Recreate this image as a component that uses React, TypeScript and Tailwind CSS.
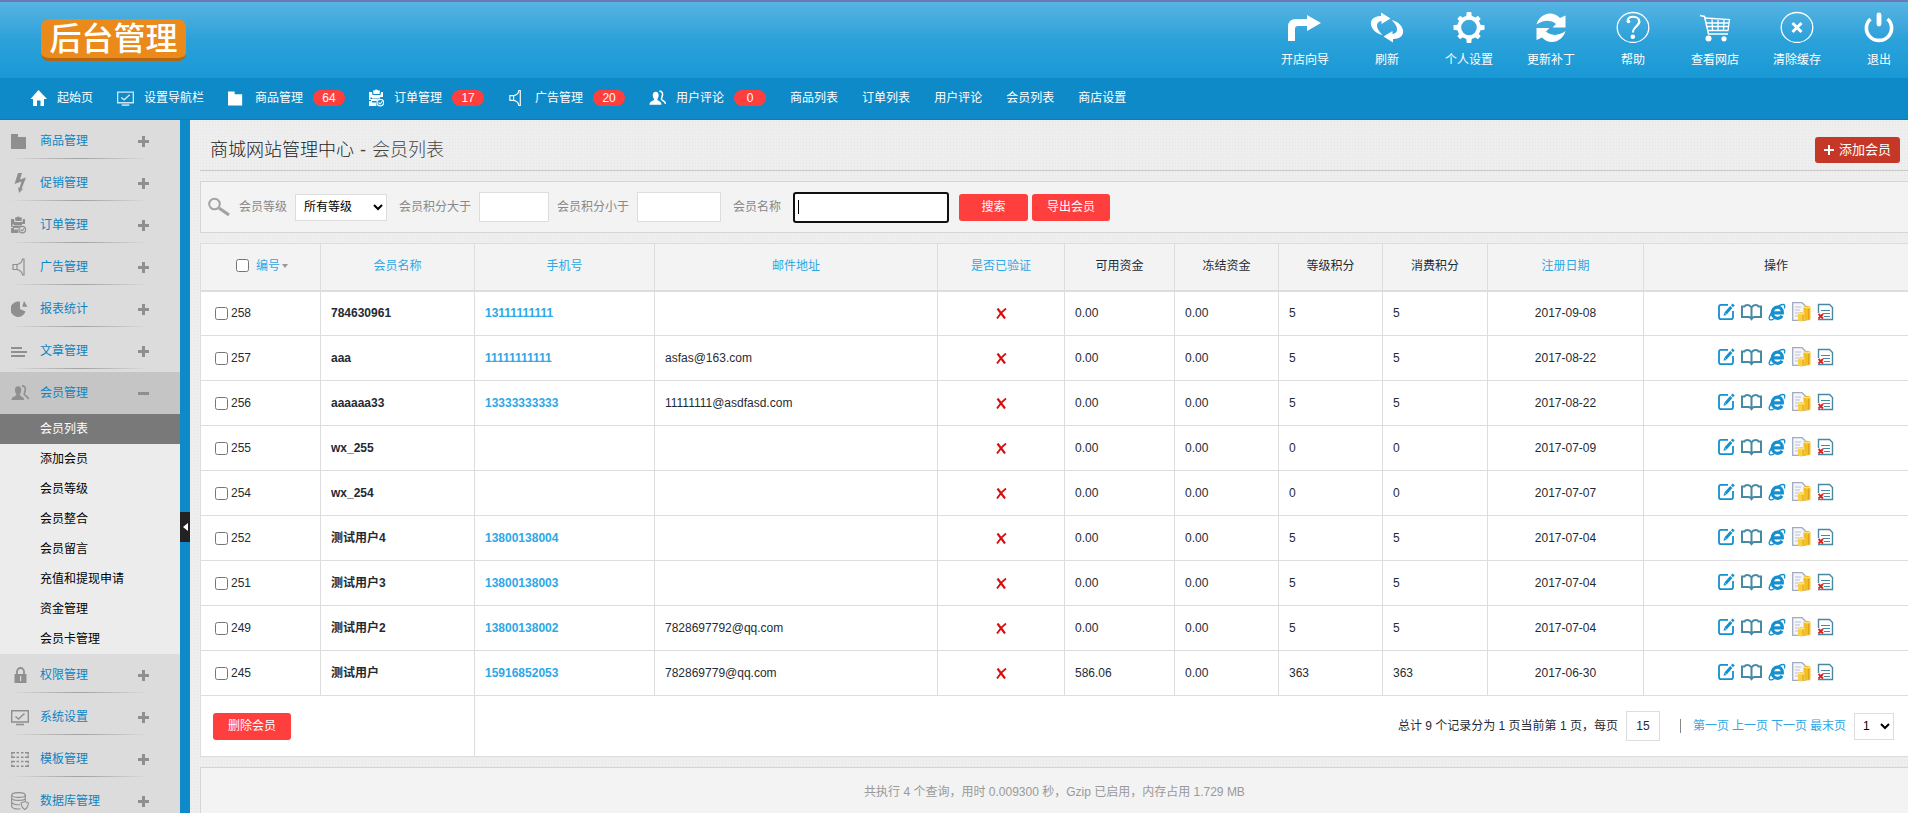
import React from "react";

type IconProps = { className?: string };

/* ---------- top toolbar icons ---------- */

function TurnIcon() {
  return (
    <svg width="34" height="32" viewBox="0 0 34 32" fill="currentColor">
      <path d="M0 30V16Q0 8 8 8H19V4L33 12L19 20V15H10Q7 15 7 18V30z" />
    </svg>
  );
}

function ReloadIcon() {
  const arrow = "M11 1.500L20.500 7.500L11.500 13V10C5.500 11 5 17 12.500 24C4 22 -1 15 1.500 9.500C3 6.500 6.500 5 11 5z";
  return (
    <svg width="34" height="32" viewBox="0 0 34 32" fill="currentColor">
      <path d={arrow} />
      <path d={arrow} transform="rotate(180 17 16.5)" />
    </svg>
  );
}

function GearIcon() {
  return (
    <svg width="34" height="32" viewBox="0 0 34 32" fill="currentColor">
      <circle cx="17" cy="16.500" r="9.800" fill="none" stroke="currentColor" strokeWidth="4" />
      {[0, 90, 180, 270].map((deg) => (
        <path key={deg} d="M14 6.500L14.800 1H19.200L20 6.500z" transform={`rotate(${deg} 17 16.5)`} />
      ))}
      {[45, 135, 225, 315].map((deg) => (
        <path key={deg} d="M14.300 6.500L15 2H19L19.700 6.500z" transform={`rotate(${deg} 17 16.5)`} />
      ))}
    </svg>
  );
}

function SyncIcon() {
  const arrow = "M2.500 13.500C4 7.500 9.500 2.500 16 2.500C20 2.500 23 4 26 7L31.500 4.500V16.500H18.500L22 13C17 8.500 9 8.500 2.500 13.500z";
  return (
    <svg width="34" height="32" viewBox="0 0 34 32" fill="currentColor">
      <path d={arrow} />
      <path d={arrow} transform="rotate(180 17 16.8)" />
    </svg>
  );
}

function HelpIcon() {
  return (
    <svg width="34" height="32" viewBox="0 0 34 32" fill="none" stroke="currentColor">
      <ellipse cx="17" cy="16.500" rx="15.800" ry="15" strokeWidth="1.300" />
      <path d="M11.500 10.500C11.500 7 14 5.800 17.200 5.800C21 5.800 23.500 8 23.500 11C23.500 15 17 15.500 17 21.500" strokeWidth="2" />
      <path d="M22.500 8C24 11 22 14 19.500 16" strokeWidth="2" />
      <circle cx="12.500" cy="10.500" r="1.800" fill="currentColor" stroke="none" />
      <circle cx="16.800" cy="25.800" r="2.300" fill="currentColor" stroke="none" />
    </svg>
  );
}

function CartIcon() {
  return (
    <svg width="34" height="32" viewBox="0 0 34 32" fill="none" stroke="currentColor" strokeWidth="1.500">
      <path d="M2 4.500L6.500 5.500L10.500 23H30" />
      <path d="M7 7L31.500 8.500L30 19.500H9.500M8 12H31M8.500 15.500H30.500M14 7.500L14.500 19.500M20 8V19.500M26 8.500L25.500 19.500" strokeWidth="1.300" />
      <circle cx="10.500" cy="27.500" r="3" fill="currentColor" stroke="none" />
      <circle cx="26" cy="27.800" r="2.600" fill="currentColor" stroke="none" />
    </svg>
  );
}

function ClearIcon() {
  return (
    <svg width="34" height="32" viewBox="0 0 34 32" fill="none" stroke="currentColor">
      <ellipse cx="17" cy="16.500" rx="15.800" ry="15" strokeWidth="1.300" />
      <path d="M12.500 12L21.500 21M21.500 12L12.500 21" strokeWidth="3" />
    </svg>
  );
}

function PowerIcon() {
  return (
    <svg width="34" height="32" viewBox="0 0 34 32" fill="none" stroke="currentColor">
      <path d="M8.500 8A12.600 12.300 0 1 0 25.500 8" strokeWidth="3.600" />
      <path d="M17 4V13" strokeWidth="4.800" strokeLinecap="round" />
    </svg>
  );
}

/* ---------- menu icons, all on a 18px grid ---------- */

function HomeIcon() {
  return (
    <svg width="17" height="18" viewBox="0 0 17 18" fill="currentColor">
      <path d="M8.500 1L17 10H14V17H10.500V11.500H7V17H3V10H0.500z" />
    </svg>
  );
}

function FolderIcon({ className = "w-[18px]" }: IconProps) {
  return (
    <svg className={className} height="18" viewBox="0 0 18 18" preserveAspectRatio="xMinYMid" fill="currentColor">
      <path d="M0 2H7V5H15V17H0z" />
    </svg>
  );
}

function BoltIcon() {
  return (
    <svg width="18" height="20" viewBox="0 0 18 20" fill="currentColor">
      <path d="M7 0H11L9 6.500L15 4.500L10.500 16L12.500 15.500L8 20L7 14L8.500 15L10.500 8.500L3.500 11z" />
    </svg>
  );
}

function ClipboardIcon({ className = "w-[18px]" }: IconProps) {
  return (
    <svg className={className} height="18" viewBox="0 0 18 18" preserveAspectRatio="xMinYMid slice">
      <path d="M4 1.500H5.500A2 2 0 0 1 9 1.500H11L10.500 5H4.500z" fill="currentColor" />
      <path d="M0 3H3L3.500 6H11.500L12 3H14V8H11V9.500H3V8.500H1.500V10H9L7.500 12H3V13.500H7L7.500 17H0V12H2V11H0z" fill="currentColor" />
      <circle cx="11.300" cy="13.600" r="3.300" fill="none" stroke="currentColor" strokeWidth="1.200" />
      <path d="M9.500 13.500L11 15L13.300 12.300" fill="none" stroke="currentColor" strokeWidth="1.100" />
    </svg>
  );
}

function HornIcon({ className = "w-[18px]" }: IconProps) {
  return (
    <svg className={className} height="18" viewBox="0 0 18 18" fill="none" stroke="currentColor" strokeWidth="1.200">
      <path d="M2 6.500H6V11.500H2z" />
      <path d="M6 6.500Q11 5.500 11.500 1H13V17H11.500Q11 12.500 6 11.500" />
    </svg>
  );
}

function PieIcon() {
  return (
    <svg width="18" height="18" viewBox="0 0 18 18" fill="currentColor">
      <path d="M9 1.800V9L14.500 11.500A7.700 7.700 0 1 1 9 1.800z" />
      <path d="M11.200 6.800L13 1L16.500 6.800z" />
    </svg>
  );
}

function LinesIcon() {
  return (
    <svg width="18" height="18" viewBox="0 0 18 18" fill="currentColor">
      <path d="M0 5H11V7H0zM0 9H16V11H0zM0 13H14V15H0z" />
    </svg>
  );
}

function UsersIcon({ className = "w-[18px]" }: IconProps) {
  return (
    <svg className={className} height="18" viewBox="0 0 19 18" preserveAspectRatio="xMinYMid" fill="currentColor">
      <path d="M7.500 2C10 2 11 4 10.800 6.500C10.600 8.500 9.500 9.800 9.300 10.800C9.500 12.500 14 12.500 14 16.500H0.500C0.500 12.500 5.500 12.500 5.700 10.800C5.500 9.800 4.400 8.500 4.200 6.500C4 4 5 2 7.500 2z" />
      <path d="M11.500 1.500C14.500 1 15.500 3.500 15 6C14.800 8 13.800 9 14 10.500C15 12 18 12.500 18.500 15.500" fill="none" stroke="currentColor" strokeWidth="1.700" />
    </svg>
  );
}

function LockIcon() {
  return (
    <svg width="18" height="18" viewBox="0 0 18 18">
      <path d="M6 8V5.500A3.500 3.500 0 0 1 13 5.500V8" fill="none" stroke="currentColor" strokeWidth="1.800" />
      <path d="M3.500 8H15.500V17H3.500zM9 10V15H10.200V10z" fill="currentColor" fillRule="evenodd" />
    </svg>
  );
}

function MonitorIcon({ className = "w-[18px]" }: IconProps) {
  return (
    <svg className={className} height="18" viewBox="0 0 18 18" fill="none" stroke="currentColor">
      <path d="M0.700 2.700H17.300V14H0.700z" strokeWidth="1.400" />
      <path d="M4.500 8.500L7.500 11L13.500 5.500" strokeWidth="1.500" />
      <path d="M5 16.500H13" strokeWidth="1.600" />
    </svg>
  );
}

function TemplateIcon() {
  return (
    <svg width="18" height="18" viewBox="0 0 18 18" fill="none" stroke="currentColor" strokeWidth="1.500">
      <path d="M0.800 4.500V2.800H4M5.500 2.800H8M10 2.800H12.500M14 2.800H17.200V4.500M0.800 5.500V7.200H4M5.500 7.200H8M10 7.200H12.500M14 7.200H17.200V5.500" />
      <path d="M0.800 13V11.500H4M5.500 11.500H8M10 11.500H12.500M14 11.500H17.200V13M0.800 14.500V16.200H4M5.500 16.200H8M10 16.200H12.500M14 16.200H17.200V14.500" />
    </svg>
  );
}

function DatabaseIcon() {
  return (
    <svg width="18" height="18" viewBox="0 0 18 18" fill="none" stroke="currentColor" strokeWidth="1.100">
      <ellipse cx="7.500" cy="3" rx="6.800" ry="2.400" />
      <path d="M0.700 3V6.500C2 9 13 9 14.300 6.500V3M0.700 6.500V10.500C2 12.800 7 13 9 12.500M14.300 6.500V9M0.700 10.500V14.500C2 17 6 17.300 9.500 16.800" />
      <path d="M10.200 10.800L13.800 9.500L17.300 10.800C17.300 14 16.500 16 13.800 17.400C11 16 10.200 14 10.200 10.800z" />
    </svg>
  );
}

/* ---------- row action icons ---------- */

function EditIcon() {
  return (
    <svg width="17" height="18" viewBox="0 0 17 18" fill="none" stroke="#1590cf">
      <path d="M10 1.800H3Q1 1.800 1 4V14Q1 16.200 3 16.200H13Q15 16.200 15 14V8" strokeWidth="1.800" />
      <path d="M7.500 10.500L13.300 4" strokeWidth="3" />
      <path d="M14 3.200L15.600 1.400" strokeWidth="2.800" />
      <path d="M5.500 12.800L6.200 9.800L8.500 12z" fill="#1590cf" stroke="none" />
    </svg>
  );
}

function BookIcon() {
  return (
    <svg width="21" height="18" viewBox="0 0 21 18" fill="none" stroke="#4789a3" strokeWidth="2">
      <path d="M10.500 15V4.500Q9 2 6.500 2Q4 2 3.500 3.500H1V14H7.500Q9.500 14 10.500 15.500Q11.500 14 13.500 14H20V3.500H17.500Q17 2 14.500 2Q12 2 10.500 4.500" />
      <path d="M8.500 15H12.500L10.500 17.800z" fill="#4789a3" stroke="none" />
    </svg>
  );
}

function BrowserIcon() {
  return (
    <svg width="18" height="18" viewBox="0 0 18 18" fill="none" stroke="#1590cf">
      <path d="M4.500 9.800H14.300C14.500 6.300 12.500 4.200 9.500 4.200C6.500 4.200 4.300 6.600 4.300 9.800C4.300 13 6.500 15.300 9.700 15.300C11.500 15.300 13 14.500 14 12.800" strokeWidth="3.200" />
      <path d="M16.300 5.500C17.300 3 16.800 1.400 14.800 1.500C10.500 1.800 2.500 8.500 1.200 14.500C0.800 17.500 3.500 17.500 6.500 15.500" strokeWidth="1.300" />
    </svg>
  );
}

function AccountIcon() {
  return (
    <svg width="19" height="20" viewBox="0 0 19 20">
      <path d="M0.700 0.700H10L13 3.500V18.300H0.700z" fill="#f4f6fc" stroke="#a3a9c0" strokeWidth="1.300" />
      <path d="M3 5H9M3 8H8M3 11H7M3 14H6" stroke="#b9bfd6" strokeWidth="1.200" />
      <path d="M11.500 5Q15 2.500 18.500 5V17.500Q15 19.500 11.500 17.500z" fill="#f3bd24" />
      <path d="M6 11Q9 9 12.500 11V18.500Q9 20.500 6 18.500z" fill="#f8cf45" />
      <path d="M11.500 5Q15 7 18.500 5M6 11Q9 13 12.500 11" stroke="#fdeb9c" strokeWidth="1" fill="none" />
      <path d="M16.500 7V17.500M11 13V18.500" stroke="#e0a218" strokeWidth="1" />
    </svg>
  );
}

function RemoveIcon() {
  return (
    <svg width="17" height="18" viewBox="0 0 17 18" fill="none">
      <path d="M1.500 10V1.500H12.500L15.500 4.500V16.500H1" stroke="#4789a3" strokeWidth="1.400" />
      <path d="M4 7.500H13M6 10.500H13M7 13.500H13" stroke="#4789a3" strokeWidth="1.200" />
      <path d="M1.500 11L6 15.500M6 11L1.500 15.500" stroke="#dd2222" strokeWidth="1.800" />
    </svg>
  );
}

const TOOLS = [
  { label: "开店向导", icon: <TurnIcon /> },
  { label: "刷新", icon: <ReloadIcon /> },
  { label: "个人设置", icon: <GearIcon /> },
  { label: "更新补丁", icon: <SyncIcon /> },
  { label: "帮助", icon: <HelpIcon /> },
  { label: "查看网店", icon: <CartIcon /> },
  { label: "清除缓存", icon: <ClearIcon /> },
  { label: "退出", icon: <PowerIcon /> },
];

const NAV: { label: string; icon?: React.ReactNode; count?: number }[] = [
  { label: "起始页", icon: <HomeIcon /> },
  { label: "设置导航栏", icon: <MonitorIcon className="w-[17px] opacity-80" /> },
  { label: "商品管理", icon: <FolderIcon className="w-[17px]" />, count: 64 },
  { label: "订单管理", icon: <ClipboardIcon className="w-[15px]" />, count: 17 },
  { label: "广告管理", icon: <HornIcon className="w-[17px]" />, count: 20 },
  { label: "用户评论", icon: <UsersIcon className="w-[17px]" />, count: 0 },
  { label: "商品列表" },
  { label: "订单列表" },
  { label: "用户评论" },
  { label: "会员列表" },
  { label: "商店设置" },
];

const MENU: { label: string; icon: React.ReactNode; children?: string[] }[] = [
  { label: "商品管理", icon: <FolderIcon /> },
  { label: "促销管理", icon: <BoltIcon /> },
  { label: "订单管理", icon: <ClipboardIcon /> },
  { label: "广告管理", icon: <HornIcon /> },
  { label: "报表统计", icon: <PieIcon /> },
  { label: "文章管理", icon: <LinesIcon /> },
  {
    label: "会员管理",
    icon: <UsersIcon />,
    children: [
      "会员列表",
      "添加会员",
      "会员等级",
      "会员整合",
      "会员留言",
      "充值和提现申请",
      "资金管理",
      "会员卡管理",
    ],
  },
  { label: "权限管理", icon: <LockIcon /> },
  { label: "系统设置", icon: <MonitorIcon /> },
  { label: "模板管理", icon: <TemplateIcon /> },
  { label: "数据库管理", icon: <DatabaseIcon /> },
];

const USERS = [
  { id: 258, name: "784630961", phone: "13111111111", email: "", money: "0.00", rank: 5, pay: 5, date: "2017-09-08" },
  { id: 257, name: "aaa", phone: "11111111111", email: "asfas@163.com", money: "0.00", rank: 5, pay: 5, date: "2017-08-22" },
  { id: 256, name: "aaaaaa33", phone: "13333333333", email: "11111111@asdfasd.com", money: "0.00", rank: 5, pay: 5, date: "2017-08-22" },
  { id: 255, name: "wx_255", phone: "", email: "", money: "0.00", rank: 0, pay: 0, date: "2017-07-09" },
  { id: 254, name: "wx_254", phone: "", email: "", money: "0.00", rank: 0, pay: 0, date: "2017-07-07" },
  { id: 252, name: "测试用户4", phone: "13800138004", email: "", money: "0.00", rank: 5, pay: 5, date: "2017-07-04" },
  { id: 251, name: "测试用户3", phone: "13800138003", email: "", money: "0.00", rank: 5, pay: 5, date: "2017-07-04" },
  { id: 249, name: "测试用户2", phone: "13800138002", email: "7828697792@qq.com", money: "0.00", rank: 5, pay: 5, date: "2017-07-04" },
  { id: 245, name: "测试用户", phone: "15916852053", email: "782869779@qq.com", money: "586.06", rank: 363, pay: 363, date: "2017-06-30" },
];

const ACTIONS = [
  { title: "编辑", icon: <EditIcon /> },
  { title: "收货地址", icon: <BookIcon /> },
  { title: "查看订单", icon: <BrowserIcon /> },
  { title: "查看账目明细", icon: <AccountIcon /> },
  { title: "移除", icon: <RemoveIcon /> },
];

function Header() {
  return (
    <header className="shrink-0 text-white">
      <div className="flex h-[78px] items-start justify-between border-t-2 border-[#6c79b3] bg-linear-to-b from-[#55b4e2] via-[#2ba1d9] to-[#1899d6] pr-[5px] pl-[41px]">
        <a
          href="#"
          className="mt-[17px] flex h-[42px] w-[145px] items-center justify-center rounded-lg border-b-[3px] border-[#b5660f] bg-[#ea8a1a] text-[32px] leading-none font-medium"
        >
          后台管理
        </a>
        <ul className="flex gap-[34px] pt-[9px]">
          {TOOLS.map((tool) => (
            <li key={tool.label} className="w-12">
              <a href="#" className="flex flex-col items-center gap-[9px] whitespace-nowrap">
                {tool.icon}
                <span className="leading-4">{tool.label}</span>
              </a>
            </li>
          ))}
        </ul>
      </div>
      <nav className="h-[42px] border-b border-[#0b7cb8] bg-[#0e8ac9] px-[30px]">
        <ul className="flex h-[39px] items-center gap-6">
          {NAV.map((item, index) => (
            <li key={index}>
              <a href="#" className="flex items-center gap-[10px]">
                {item.icon}
                <span>{item.label}</span>
                {item.count !== undefined && (
                  <span className="h-4 w-8 rounded-full bg-[#ff3e3e] text-center leading-4">{item.count}</span>
                )}
              </a>
            </li>
          ))}
        </ul>
      </nav>
    </header>
  );
}

function Sidebar() {
  return (
    <aside className="w-[180px] shrink-0 overflow-hidden bg-[#dcdcdc]">
      {MENU.map((item) => (
        <div key={item.label}>
          <button
            className={
              item.children
                ? "flex h-[42px] w-full flex-col bg-[#c5c5c5]"
                : "flex h-[42px] w-full flex-col"
            }
          >
            <span className="flex h-[38px] items-center pt-1 pl-[11px] text-[#8f8f8f]">
              {item.icon}
              <span className="ml-[11px] w-[98px] text-left text-[#0e83c2]">{item.label}</span>
              <svg width="11" height="11" viewBox="0 0 11 11" fill="currentColor">
                <path d={item.children ? "M0 4H11V7H0z" : "M4 0H7V4H11V7H7V11H4V7H0V4H4z"} />
              </svg>
            </span>
            {!item.children && (
              <span className="ml-[10px] h-px w-[138px] bg-linear-to-r from-transparent via-[#a0a0a0] to-transparent" />
            )}
          </button>
          {item.children && (
            <ul className="bg-[#ececec]">
              {item.children.map((child, index) => (
                <li key={child}>
                  <a
                    href="#"
                    className={
                      index === 0
                        ? "block bg-[#797979] pl-10 leading-[30px] text-white"
                        : "block pl-10 leading-[30px] text-black"
                    }
                  >
                    {child}
                  </a>
                </li>
              ))}
            </ul>
          )}
        </div>
      ))}
    </aside>
  );
}

function SearchBar() {
  const field = "h-[30px] border border-[#ddd] bg-white px-1";
  return (
    <form className="flex h-[52px] items-center border border-r-0 border-[#d5d5d5] bg-[#f3f3f3] pl-[7px] text-[#888]">
      <svg width="22" height="20" viewBox="0 0 22 20" fill="none" stroke="#a3a3a3">
        <circle cx="6.500" cy="7" r="5.300" strokeWidth="2" />
        <path d="M11 11L21 18" strokeWidth="3.200" />
      </svg>
      <label htmlFor="rank" className="ml-[9px]">会员等级</label>
      <select id="rank" className="ml-2 h-[27px] w-[92px] border border-[#ddd] bg-white pl-1 text-black">
        <option>所有等级</option>
      </select>
      <label htmlFor="points-gt" className="ml-3">会员积分大于</label>
      <input id="points-gt" type="text" className={`${field} ml-2 w-[70px]`} />
      <label htmlFor="points-lt" className="ml-2">会员积分小于</label>
      <input id="points-lt" type="text" className={`${field} ml-2 w-[84px]`} />
      <label htmlFor="keyword" className="ml-3">会员名称</label>
      <div className="relative ml-[14px]">
        <input
          id="keyword"
          type="text"
          autoFocus
          className="block h-[27px] w-[152px] rounded-[1px] bg-white px-1 text-black caret-transparent outline-2 outline-[#101010]"
        />
        <span className="absolute top-[6px] left-[3px] h-[14px] w-px bg-black" />
      </div>
      <button type="button" className="ml-3 h-[27px] w-[69px] rounded-[3px] bg-[#ff3e3e] text-white">搜索</button>
      <button type="button" className="ml-1 h-[27px] w-[78px] rounded-[3px] bg-[#ff3e3e] text-white">导出会员</button>
    </form>
  );
}

function UserTable() {
  const th = "border border-[#ddd] pb-[2px] font-normal";
  const td = "border border-[#ddd] px-[10px]";
  return (
    <table className="w-full table-fixed border-collapse bg-white text-[#1f2b33]">
      <colgroup>
        <col className="w-[120px]" />
        <col className="w-[154px]" />
        <col className="w-[180px]" />
        <col />
        <col className="w-[127px]" />
        <col className="w-[110px]" />
        <col className="w-[104px]" />
        <col className="w-[104px]" />
        <col className="w-[105px]" />
        <col className="w-[156px]" />
        <col className="w-[265px]" />
      </colgroup>
      <thead>
        <tr className="h-[47px] border-b-2 border-[#ddd] bg-[#f3f3f3] text-[#2ea7e6]">
          <th className={th}>
            <span className="flex items-center justify-center pl-1">
              <input type="checkbox" aria-label="全选" className="mr-[7px] size-[13px]" />
              <a href="#">编号</a>
              <svg width="8" height="4" viewBox="0 0 8 4" className="ml-px" fill="#999">
                <path d="M1 0H7L4 4z" />
              </svg>
            </span>
          </th>
          <th className={th}><a href="#">会员名称</a></th>
          <th className={th}><a href="#">手机号</a></th>
          <th className={th}><a href="#">邮件地址</a></th>
          <th className={th}><a href="#">是否已验证</a></th>
          <th className={`${th} text-[#1f2b33]`}>可用资金</th>
          <th className={`${th} text-[#1f2b33]`}>冻结资金</th>
          <th className={`${th} text-[#1f2b33]`}>等级积分</th>
          <th className={`${th} text-[#1f2b33]`}>消费积分</th>
          <th className={th}><a href="#">注册日期</a></th>
          <th className={`${th} text-[#1f2b33]`}>操作</th>
        </tr>
      </thead>
      <tbody>
        {USERS.map((user) => (
          <tr key={user.id} className="h-[45px]">
            <td className="border border-[#ddd] pl-[14px]">
              <label className="flex items-center gap-[3px]">
                <input type="checkbox" className="size-[13px]" />
                {user.id}
              </label>
            </td>
            <td className={`${td} font-bold`}>{user.name}</td>
            <td className={`${td} font-bold text-[#2ea7e6]`}>{user.phone}</td>
            <td className={td}>{user.email}</td>
            <td className={td}>
              <svg width="11" height="11" viewBox="0 0 11 11" className="mx-auto" fill="none" stroke="#d60f0f">
                <path d="M1.500 0.500L9 10.500" strokeWidth="2.200" />
                <path d="M10 0.500Q5 4 1 10.500" strokeWidth="1.800" />
              </svg>
            </td>
            <td className={td}>{user.money}</td>
            <td className={td}>0.00</td>
            <td className={td}>{user.rank}</td>
            <td className={td}>{user.pay}</td>
            <td className={`${td} text-center`}>{user.date}</td>
            <td className={`${td} pb-[2px]`}>
              <div className="flex items-center justify-center gap-[6px]">
                {ACTIONS.map((action) => (
                  <a key={action.title} href="#" title={action.title}>
                    {action.icon}
                  </a>
                ))}
              </div>
            </td>
          </tr>
        ))}
        <tr className="h-[61px]">
          <td colSpan={2} className="border border-[#ddd] pl-3">
            <button className="h-[27px] w-[78px] rounded-[3px] bg-[#ff3e3e] text-white">删除会员</button>
          </td>
          <td colSpan={9} className="border border-[#ddd] pr-[14px]">
            <div className="flex items-center justify-end">
              <label htmlFor="page-size">总计 9 个记录分为 1 页当前第 1 页，每页</label>
              <input
                id="page-size"
                type="text"
                defaultValue="15"
                className="ml-2 h-[30px] w-[34px] border border-[#ddd] text-center"
              />
              <span className="ml-5 h-[14px] w-px bg-[#888]" />
              <div className="ml-3 flex gap-[3px] text-[#2ea7e6]">
                <a href="#">第一页</a>
                <a href="#">上一页</a>
                <a href="#">下一页</a>
                <a href="#">最末页</a>
              </div>
              <select aria-label="页码" className="ml-2 h-[27px] w-10 border border-[#ddd] bg-white pl-1 text-black">
                <option>1</option>
              </select>
            </div>
          </td>
        </tr>
      </tbody>
    </table>
  );
}

export default function App() {
  return (
    <div className="flex h-screen flex-col overflow-hidden font-['Liberation_Sans','Noto_Sans_CJK_SC',sans-serif] text-xs">
      <Header />
      <div className="flex min-h-0 flex-1">
        <Sidebar />
        <div className="relative w-[10px] shrink-0 bg-[#0e8ac9]">
          <button
            aria-label="收起菜单"
            className="absolute top-[392px] left-0 flex h-[30px] w-[10px] items-center justify-center bg-[#222]"
          >
            <svg width="5" height="8" viewBox="0 0 5 8" fill="#fff">
              <path d="M5 0V8L0 4z" />
            </svg>
          </button>
        </div>
        <main className="min-w-0 flex-1 overflow-hidden bg-[#eeeeee] bg-[radial-gradient(#e6e6e6_1px,transparent_1px)] bg-size-[3px_3px] pl-[10px]">
          <div className="flex h-[51px] items-center justify-between border-b border-[#c9c9c9] pt-[9px] pr-2 pl-[10px]">
            <h1 className="flex text-lg font-light text-[#222]">
              <a href="#">商城网站管理中心</a>
              <span className="mx-[6px] text-[#444]">-</span>
              <span className="text-[#444]">会员列表</span>
            </h1>
            <a
              href="#"
              className="flex h-[26px] items-center gap-[5px] rounded-[3px] bg-[#c53727] px-[9px] text-[13px] text-white"
            >
              <svg width="10" height="10" viewBox="0 0 10 10" fill="currentColor">
                <path d="M4 0H6V4H10V6H6V10H4V6H0V4H4z" />
              </svg>
              添加会员
            </a>
          </div>
          <div className="flex flex-col gap-[10px] pt-[10px]">
            <SearchBar />
            <div className="-mr-px">
              <UserTable />
            </div>
            <footer className="border border-r-0 border-[#d5d5d5] bg-[#f3f3f3] py-4 text-center text-[#999]">
              共执行 4 个查询，用时 0.009300 秒，Gzip 已启用，内存占用 1.729 MB
            </footer>
          </div>
        </main>
      </div>
    </div>
  );
}
